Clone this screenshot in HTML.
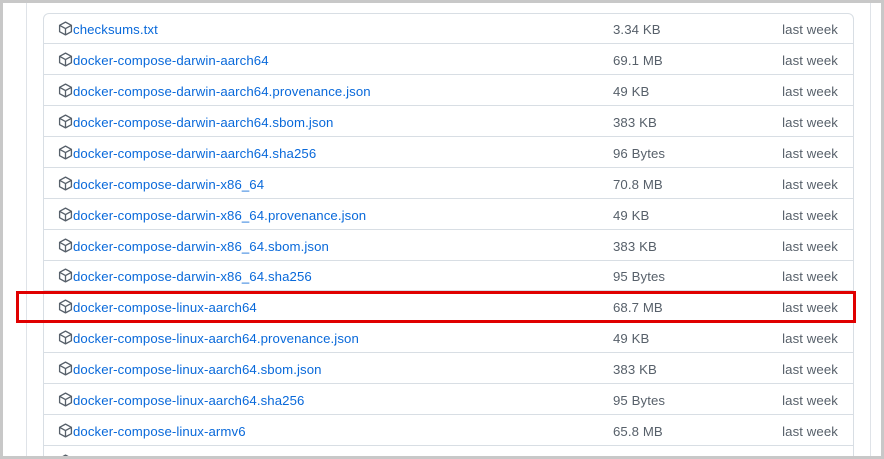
<!DOCTYPE html>
<html><head><style>
*{margin:0;padding:0;box-sizing:border-box}
html,body{width:884px;height:459px;overflow:hidden}
body{background:#fff;font-family:"Liberation Sans",Arial,sans-serif;position:relative}
.frame{position:absolute;left:0;top:0;width:884px;height:459px;border:3px solid #c8c8c8}
.vl{position:absolute;top:0;bottom:0;width:1px;background:#dfe3e8}
.box{position:absolute;left:43px;top:13px;width:811px;height:460px;border:1px solid #d8dee4;border-radius:6px;overflow:hidden}
.row{position:absolute;left:0;right:0;height:31px;border-bottom:1px solid #d8dee4;font-size:13.2px;line-height:31px;letter-spacing:0.1px}
.row svg{position:absolute;left:14px;top:8px}
.n{position:absolute;left:29px;top:1px;color:#0969da}
.s{position:absolute;left:569px;top:1px;color:#57606a}
.d{position:absolute;right:15px;top:1px;color:#57606a}
.red{position:absolute;left:16px;top:291px;width:840px;height:32px;border:3px solid #e00000}
</style></head><body>
<div class="vl" style="left:26px"></div>
<div class="vl" style="left:870px"></div>
<div class="box"></div>
<div class="red"></div>
<div class="frame"></div>
<script>
const rows=[["checksums.txt","3.34 KB"],["docker-compose-darwin-aarch64","69.1 MB"],["docker-compose-darwin-aarch64.provenance.json","49 KB"],["docker-compose-darwin-aarch64.sbom.json","383 KB"],["docker-compose-darwin-aarch64.sha256","96 Bytes"],["docker-compose-darwin-x86_64","70.8 MB"],["docker-compose-darwin-x86_64.provenance.json","49 KB"],["docker-compose-darwin-x86_64.sbom.json","383 KB"],["docker-compose-darwin-x86_64.sha256","95 Bytes"],["docker-compose-linux-aarch64","68.7 MB"],["docker-compose-linux-aarch64.provenance.json","49 KB"],["docker-compose-linux-aarch64.sbom.json","383 KB"],["docker-compose-linux-aarch64.sha256","95 Bytes"],["docker-compose-linux-armv6","65.8 MB"],["",""]];
const ic='<svg width="15" height="15" viewBox="0 0 16 16"><path fill="none" stroke="#57606a" stroke-width="1.4" stroke-linejoin="round" d="M8 1.2 14.3 4.6v6.8L8 14.8 1.7 11.4V4.6Z M1.9 4.7 8 8.1l6.1-3.4 M8 8.1v6.6"/></svg>';
let h='';rows.forEach((r,i)=>{h+=`<div class="row" style="top:${-1+i*30.93}px">${ic}<span class="n">${r[0]}</span><span class="s">${r[1]}</span><span class="d">${r[0]?'last week':''}</span></div>`});
document.querySelector('.box').innerHTML=h;
</script>
</body></html>
